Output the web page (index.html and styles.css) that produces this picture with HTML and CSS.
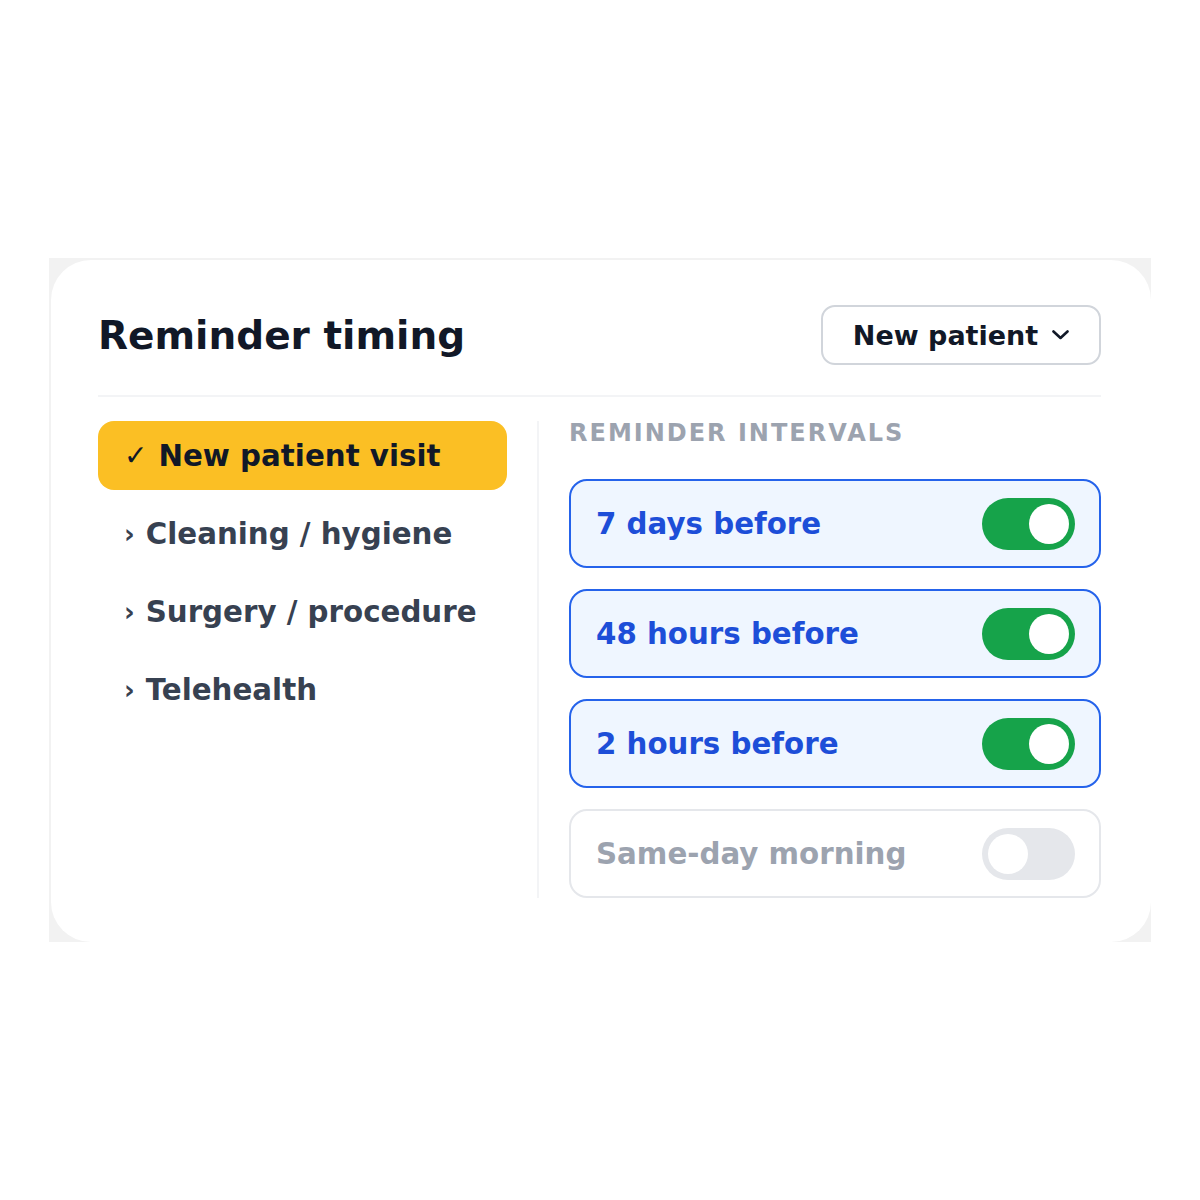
FILE: index.html
```html
<!DOCTYPE html>
<html lang="en">
<head>
    <meta charset="UTF-8">
    <meta name="viewport" content="width=device-width, initial-scale=1.0">
    <title>Reminder timing</title>
    <link rel="stylesheet" href="styles.css">
</head>
<body>
    <div class="frame">
        <section class="card">
            <header class="card-header">
                <h1>Reminder timing</h1>
                <button class="select-btn">
                    <span>New patient</span>
                    <svg width="17" height="10" viewBox="0 0 17 10"><path d="M1.5 1.5 L8.5 8 L15.5 1.5" fill="none" stroke="#111827" stroke-width="2.6" stroke-linecap="round" stroke-linejoin="round"/></svg>
                </button>
            </header>
            <div class="card-body">
                <ul class="type-list">
                    <li class="type-item active"><span class="mark">✓</span>New patient visit</li>
                    <li class="type-item"><span class="mark">›</span>Cleaning / hygiene</li>
                    <li class="type-item"><span class="mark">›</span>Surgery / procedure</li>
                    <li class="type-item"><span class="mark">›</span>Telehealth</li>
                </ul>
                <div class="intervals">
                    <h2>Reminder intervals</h2>
                    <div class="interval on">
                        <span>7 days before</span>
                        <span class="toggle"><span class="knob"></span></span>
                    </div>
                    <div class="interval on">
                        <span>48 hours before</span>
                        <span class="toggle"><span class="knob"></span></span>
                    </div>
                    <div class="interval on">
                        <span>2 hours before</span>
                        <span class="toggle"><span class="knob"></span></span>
                    </div>
                    <div class="interval">
                        <span>Same-day morning</span>
                        <span class="toggle"><span class="knob"></span></span>
                    </div>
                </div>
            </div>
        </section>
    </div>
</body>
</html>
```

FILE: styles.css
```css
* {
    margin: 0;
    padding: 0;
    box-sizing: border-box;
}
body {
    font-family: "DejaVu Sans", Verdana, sans-serif;
    background-color: #ffffff;
    height: 100vh;
    display: flex;
    align-items: center;
    justify-content: center;
}
.frame {
    width: 1102px;
    background-color: #f2f2f2;
    padding: 2px 0 0 2px;
}
.card {
    background-color: #ffffff;
    border-radius: 40px;
    padding: 45px 50px 44px 47px;
}
.card-header {
    display: flex;
    align-items: center;
    justify-content: space-between;
    padding-bottom: 30px;
    border-bottom: 2px solid #f3f4f6;
}
.card-header h1 {
    font-size: 39px;
    font-weight: bold;
    color: #111827;
}
.select-btn {
    height: 60px;
    width: 280px;
    display: flex;
    align-items: center;
    justify-content: center;
    gap: 14px;
    background: #ffffff;
    border: 2px solid #d1d5db;
    border-radius: 14px;
    font-family: inherit;
    font-size: 27px;
    font-weight: bold;
    color: #111827;
}
.card-body {
    display: flex;
    margin-top: 24px;
}
.type-list {
    list-style: none;
    width: 409px;
    display: flex;
    flex-direction: column;
    gap: 9px;
    margin-right: 30px;
}
.type-item {
    height: 69px;
    display: flex;
    align-items: center;
    padding-left: 26px;
    border-radius: 16px;
    font-size: 29.3px;
    font-weight: bold;
    color: #374151;
}
.type-item .mark {
    margin-right: 11px;
    font-size: 26px;
}
.type-item.active {
    background-color: #fbbf24;
    color: #111827;
}
.type-item.active .mark {
    font-size: 28px;
    margin-right: 11px;
}
.intervals {
    flex: 1;
    border-left: 2px solid #f3f4f6;
    padding-left: 30px;
    display: flex;
    flex-direction: column;
    gap: 21px;
}
.intervals h2 {
    font-size: 24px;
    line-height: 24px;
    letter-spacing: 2px;
    text-transform: uppercase;
    color: #9ca3af;
    margin-bottom: 13px;
}
.interval {
    height: 89px;
    display: flex;
    align-items: center;
    justify-content: space-between;
    padding: 0 24px 0 25px;
    border: 2px solid #e5e7eb;
    border-radius: 18px;
    background-color: #ffffff;
    font-size: 29.3px;
    font-weight: bold;
    color: #9ca3af;
}
.interval.on {
    border-color: #2563eb;
    background-color: #eff6ff;
    color: #1d4ed8;
}
.toggle {
    width: 93px;
    height: 52px;
    border-radius: 26px;
    background-color: #e5e7eb;
    padding: 6px;
    display: flex;
    justify-content: flex-start;
}
.knob {
    width: 40px;
    height: 40px;
    border-radius: 50%;
    background-color: #ffffff;
}
.interval.on .toggle {
    background-color: #16a34a;
    justify-content: flex-end;
}
```
